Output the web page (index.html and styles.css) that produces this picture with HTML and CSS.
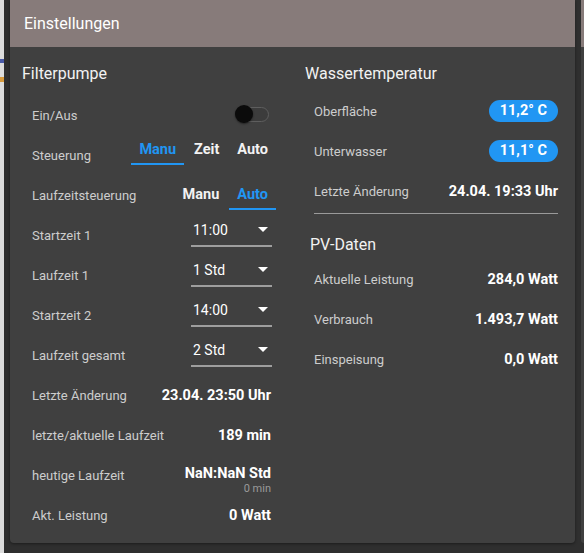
FILE: index.html
```html
<!DOCTYPE html>
<html lang="de">
<head>
<meta charset="utf-8">
<title>Einstellungen</title>
<link rel="stylesheet" href="styles.css">
</head>
<body>
<div class="screen">
  <div class="page-strip">
    <span class="bit bit-a"></span>
    <span class="bit bit-b"></span>
  </div>
  <section class="dialog">
    <header class="dialog-head">Einstellungen</header>
    <div class="dialog-body">
      <div class="col col-left">
        <h2 class="heading">Filterpumpe</h2>
        <div class="row">
          <span class="label">Ein/Aus</span>
          <span class="toggle"><span class="track"></span><span class="thumb"></span></span>
        </div>
        <div class="row">
          <span class="label">Steuerung</span>
          <span class="tabs tabs-up">
            <span class="tab active">Manu</span>
            <span class="tab">Zeit</span>
            <span class="tab">Auto</span>
          </span>
        </div>
        <div class="row">
          <span class="label">Laufzeitsteuerung</span>
          <span class="tabs tabs-down">
            <span class="tab">Manu</span>
            <span class="tab active">Auto</span>
          </span>
        </div>
        <div class="row">
          <span class="label">Startzeit 1</span>
          <span class="select"><span class="select-text">11:00</span><svg class="caret" viewBox="0 0 10 5" width="10" height="5"><path d="M0 0L5 5L10 0Z" fill="#ffffff"/></svg></span>
        </div>
        <div class="row">
          <span class="label">Laufzeit 1</span>
          <span class="select"><span class="select-text">1 Std</span><svg class="caret" viewBox="0 0 10 5" width="10" height="5"><path d="M0 0L5 5L10 0Z" fill="#ffffff"/></svg></span>
        </div>
        <div class="row">
          <span class="label">Startzeit 2</span>
          <span class="select"><span class="select-text">14:00</span><svg class="caret" viewBox="0 0 10 5" width="10" height="5"><path d="M0 0L5 5L10 0Z" fill="#ffffff"/></svg></span>
        </div>
        <div class="row">
          <span class="label">Laufzeit gesamt</span>
          <span class="select"><span class="select-text">2 Std</span><svg class="caret" viewBox="0 0 10 5" width="10" height="5"><path d="M0 0L5 5L10 0Z" fill="#ffffff"/></svg></span>
        </div>
        <div class="row">
          <span class="label">Letzte Änderung</span>
          <span class="value">23.04. 23:50 Uhr</span>
        </div>
        <div class="row">
          <span class="label">letzte/aktuelle Laufzeit</span>
          <span class="value">189 min</span>
        </div>
        <div class="row">
          <span class="label">heutige Laufzeit</span>
          <span class="value-stack">
            <span class="value">NaN:NaN Std</span>
            <span class="sub">0 min</span>
          </span>
        </div>
        <div class="row">
          <span class="label">Akt. Leistung</span>
          <span class="value">0 Watt</span>
        </div>
      </div>
      <div class="col col-right">
        <h2 class="heading heading-water">Wassertemperatur</h2>
        <div class="row">
          <span class="label">Oberfläche</span>
          <span class="badge">11,2° C</span>
        </div>
        <div class="row">
          <span class="label">Unterwasser</span>
          <span class="badge">11,1° C</span>
        </div>
        <div class="row">
          <span class="label">Letzte Änderung</span>
          <span class="value">24.04. 19:33 Uhr</span>
        </div>
        <hr class="divider">
        <h2 class="heading heading-pv">PV-Daten</h2>
        <div class="row">
          <span class="label">Aktuelle Leistung</span>
          <span class="value">284,0 Watt</span>
        </div>
        <div class="row">
          <span class="label">Verbrauch</span>
          <span class="value">1.493,7 Watt</span>
        </div>
        <div class="row">
          <span class="label">Einspeisung</span>
          <span class="value">0,0 Watt</span>
        </div>
      </div>
    </div>
  </section>
  <div class="next-card"><div class="next-head"></div></div>
</div>
</body>
</html>
```

FILE: styles.css
```css
* { box-sizing: border-box; }
html, body { margin: 0; padding: 0; }
body {
  background: #2f2f2f;
  font-family: Roboto, "Liberation Sans", sans-serif;
  color: #ffffff;
}
.screen {
  display: flex;
  width: 584px;
  height: 553px;
  overflow: hidden;
}
.page-strip {
  width: 4px;
  flex: none;
  height: 553px;
  background: #dcdcdc;
  margin-right: 6px;
  display: flex;
  flex-direction: column;
}
.bit { display: block; width: 4px; }
.bit-a { height: 4px; margin-top: 59px; background: #4a5aa8; }
.bit-b { height: 5px; margin-top: 14px; background: #d79a3c; }
.dialog {
  width: 565px;
  flex: none;
  height: 543px;
  background: #404040;
  border-radius: 0 0 4px 4px;
  box-shadow: 0 1px 3px rgba(0,0,0,0.4);
  margin-right: 6px;
  display: flex;
  flex-direction: column;
}
.dialog-head {
  height: 47px;
  background: #877b7a;
  padding: 0 14px;
  display: flex;
  align-items: center;
  font-size: 16px;
  color: #ffffff;
  padding-bottom: 1px;
}
.dialog-body {
  display: grid;
  grid-template-columns: 259px 262px;
  column-gap: 24px;
  padding: 15px 8px 0 12px;
}
.heading {
  margin: 0;
  font-size: 16px;
  font-weight: 400;
  line-height: 24px;
  height: 24px;
  color: #f2f2f2;
}
.col-left .heading { margin-bottom: 9px; }
.heading-water { margin-bottom: 5px; }
.heading-pv { margin: 19px 0 2px 5px; }
.row {
  height: 40px;
  display: flex;
  align-items: center;
  justify-content: space-between;
  padding: 0 10px;
}
.col-right .row { padding: 0 9px; }
.label {
  font-size: 13px;
  color: #cdcdcd;
}
.value {
  font-size: 14.5px;
  font-weight: 700;
  color: #ffffff;
}
.value-stack {
  display: flex;
  flex-direction: column;
  align-items: flex-end;
  line-height: 16px;
  margin-top: 10px;
}
.sub {
  font-size: 11px;
  color: #9a9a9a;
  line-height: 13px;
}
.toggle {
  position: relative;
  width: 34px;
  height: 18px;
  margin-right: 2px;
  margin-top: -2px;
}
.track {
  position: absolute;
  left: 5px;
  top: 2px;
  width: 29px;
  height: 15px;
  border: 1px solid #5e5e5e;
  border-radius: 8px;
  background: #3c3c3c;
}
.thumb {
  position: absolute;
  left: 0;
  top: 0;
  width: 18px;
  height: 18px;
  border-radius: 50%;
  background: #0b0b0b;
  box-shadow: 0 1px 2px rgba(0,0,0,0.5);
}
.tabs {
  display: flex;
  gap: 2px;
  margin-right: -5px;
}
.tabs-up { margin-top: -5px; }
.tabs-down { margin-top: 5px; }
.tab {
  font-size: 14.5px;
  font-weight: 700;
  line-height: 20px;
  padding: 0 8px 3px;
  border-bottom: 2px solid transparent;
  color: #f2f2f2;
}
.tab.active {
  color: #2196f3;
  border-bottom-color: #2196f3;
}
.select {
  width: 81px;
  display: flex;
  align-items: center;
  justify-content: space-between;
  padding: 0 4px 5px 2px;
  border-bottom: 2px solid #9e9e9e;
  margin-top: -4px;
  margin-right: -1px;
}
.select-text {
  font-size: 14px;
  line-height: 20px;
  color: #ffffff;
}
.caret { display: block; }
.badge {
  background: #2196f3;
  color: #ffffff;
  font-size: 14.5px;
  font-weight: 700;
  line-height: 22px;
  height: 22px;
  padding: 0 11px;
  border-radius: 11px;
}
.divider {
  margin: 2px 9px 0;
  border: 0;
  border-top: 1px solid #9a9a9a;
  height: 0;
}
.next-card {
  flex: 1;
  height: 543px;
  background: #404040;
  border-radius: 0 0 0 4px;
}
.next-head {
  height: 47px;
  background: #877b7a;
}
```
